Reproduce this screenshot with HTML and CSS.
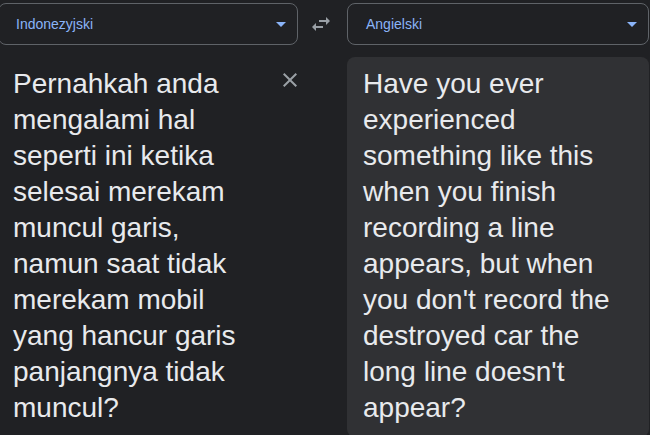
FILE: index.html
```html
<!DOCTYPE html>
<html lang="pl">
<head>
<meta charset="utf-8">
<title>Tłumacz</title>
<link rel="stylesheet" href="styles.css">
</head>
<body>
<div class="app">
  <div class="select select-src">
    <span class="lang">Indonezyjski</span>
    <svg class="caret" width="10" height="5" viewBox="0 0 10 5"><path d="M0 0h10L5 5z"/></svg>
  </div>
  <button class="swap" aria-label="Zamień języki">
    <svg width="24" height="24" viewBox="0 0 24 24"><path d="M6.99 11L3 15l3.99 4v-3H14v-2H6.99v-3zM21 9l-3.99-4v3H10v2h7.01v3L21 9z"/></svg>
  </button>
  <div class="select select-tgt">
    <span class="lang">Angielski</span>
    <svg class="caret" width="10" height="5" viewBox="0 0 10 5"><path d="M0 0h10L5 5z"/></svg>
  </div>

  <div class="pane pane-src">
    <div class="text">Pernahkah anda mengalami hal seperti ini ketika selesai merekam muncul garis, namun saat tidak merekam mobil yang hancur garis panjangnya tidak muncul?</div>
    <button class="clear" aria-label="Wyczyść">
      <svg width="24" height="24" viewBox="0 0 24 24"><path d="M19 6.41L17.59 5 12 10.59 6.41 5 5 6.41 10.59 12 5 17.59 6.41 19 12 13.41 17.59 19 19 17.59 13.41 12z"/></svg>
    </button>
  </div>
  <div class="pane pane-tgt">
    <div class="text">Have you ever experienced something like this when you finish recording a line appears, but when you don't record the destroyed car the long line doesn't appear?</div>
  </div>
</div>
</body>
</html>
```

FILE: styles.css
```css
html, body {
  margin: 0;
  padding: 0;
  background: #202124;
  overflow: hidden;
}

body {
  font-family: "Liberation Sans", Arial, sans-serif;
  color: #e8eaed;
}

.app {
  display: grid;
  grid-template-columns: 300px 49px 302px;
  grid-template-rows: 42px auto;
  row-gap: 12px;
  margin-left: -2px;
  padding-top: 3px;
  width: 651px;
}

.select {
  box-sizing: border-box;
  display: flex;
  align-items: center;
  justify-content: space-between;
  border: 1px solid #5f6368;
  border-radius: 8px;
  padding: 0 11px 0 17px;
  height: 42px;
}

.select-tgt {
  padding-left: 18px;
}

.lang {
  font-size: 14px;
  color: #8ab4f8;
  line-height: 20px;
  padding-bottom: 1px;
}

.caret {
  fill: #8ab4f8;
  margin-top: 1px;
}

.swap {
  background: none;
  border: 0;
  padding: 0;
  display: flex;
  align-items: center;
  justify-content: center;
  fill: #9aa0a6;
}

.swap svg {
  margin-left: -4px;
}

.pane {
  min-height: 380px;
  box-sizing: border-box;
}

.text {
  font-size: 28px;
  line-height: 36px;
  color: #e8eaed;
}

.pane-src {
  grid-column: 1 / 2;
  display: flex;
  align-items: flex-start;
  padding-top: 9px;
}

.pane-src .text {
  flex: none;
  width: 245px;
  padding-left: 15px;
}

.clear {
  background: none;
  border: 0;
  padding: 0;
  width: 24px;
  height: 24px;
  margin-top: 2px;
  margin-left: auto;
  margin-right: -4px;
  fill: #9aa0a6;
  flex: none;
}

.clear svg {
  display: block;
}

.pane-tgt {
  grid-column: 3 / 4;
  background: #303134;
  border-radius: 8px;
  padding: 9px 16px 0 16px;
}
```
